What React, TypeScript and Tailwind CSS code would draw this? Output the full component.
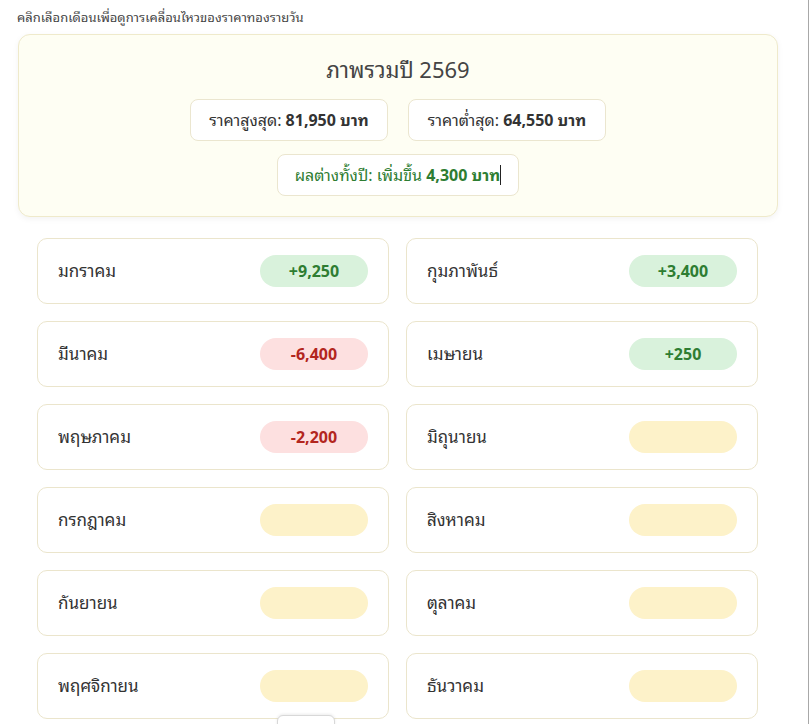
import React from "react";

type Month = { name: string; diff: number | null };

const months: Month[] = [
  { name: "มกราคม", diff: 9250 },
  { name: "กุมภาพันธ์", diff: 3400 },
  { name: "มีนาคม", diff: -6400 },
  { name: "เมษายน", diff: 250 },
  { name: "พฤษภาคม", diff: -2200 },
  { name: "มิถุนายน", diff: null },
  { name: "กรกฎาคม", diff: null },
  { name: "สิงหาคม", diff: null },
  { name: "กันยายน", diff: null },
  { name: "ตุลาคม", diff: null },
  { name: "พฤศจิกายน", diff: null },
  { name: "ธันวาคม", diff: null },
];

function fmt(n: number) {
  const s = Math.abs(n).toLocaleString("en-US");
  return (n >= 0 ? "+" : "-") + s;
}

function Badge({ diff }: { diff: number | null }) {
  if (diff === null) {
    return <div className="w-[108px] h-[32px] rounded-full bg-[#fdf2c9]" />;
  }
  if (diff >= 0) {
    return (
      <div className="w-[108px] h-[32px] rounded-full bg-[#d9f2dc] flex items-center justify-center text-[16px] font-bold text-[#2e7d32]">
        {fmt(diff)}
      </div>
    );
  }
  return (
    <div className="w-[108px] h-[32px] rounded-full bg-[#fde0e0] flex items-center justify-center text-[16px] font-bold text-[#b3261e]">
      {fmt(diff)}
    </div>
  );
}

export default function App() {
  return (
    <div className="relative w-[809px] min-h-[724px] bg-white border-r border-[#a8a8a8] overflow-hidden font-['Noto_Sans','Noto_Sans_Thai_Looped',sans-serif]">
      <div className="pl-[17px] pr-[30px] pt-[7px]">
        <div className="text-[13px] text-[#444] leading-[21px]">
          คลิกเลือกเดือนเพื่อดูการเคลื่อนไหวของราคาทองรายวัน
        </div>
        <div className="mt-[6px] ml-px rounded-[12px] border border-[#efeacb] bg-[#fefef3] shadow-[0_2px_6px_rgba(0,0,0,0.05)] h-[183px] flex flex-col items-center pt-[17px]">
          <div className="text-[22px] text-[#444] leading-[34px]">ภาพรวมปี 2569</div>
          <div className="mt-[13px] flex gap-[20px]">
            <div className="h-[42px] w-[198px] rounded-[8px] border border-[#ebe6cf] bg-white flex items-center justify-center text-[16px] text-[#333]">
              ราคาสูงสุด:&nbsp;<b className="font-bold">81,950 บาท</b>
            </div>
            <div className="h-[42px] w-[198px] rounded-[8px] border border-[#ebe6cf] bg-white flex items-center justify-center text-[16px] text-[#333]">
              ราคาต่ำสุด:&nbsp;<b className="font-bold">64,550 บาท</b>
            </div>
          </div>
          <div className="mt-[13px] h-[42px] w-[242px] rounded-[8px] border border-[#ebe6cf] bg-white flex items-center justify-center text-[16px] text-[#2e7d32]">
            ผลต่างทั้งปี: เพิ่มขึ้น&nbsp;<b className="font-bold">4,300 บาท</b>
            <span className="inline-block w-px h-[20px] bg-[#222]" />
          </div>
        </div>
        <div className="mt-[21px] px-[20px] grid grid-cols-2 gap-x-[17px] gap-y-[17px]">
          {months.map((m) => (
            <div
              key={m.name}
              className="h-[66px] rounded-[10px] border border-[#ebe5cc] bg-white flex items-center justify-between pl-[20px] pr-[20px]"
            >
              <span className="text-[17px] text-[#333]">{m.name}</span>
              <Badge diff={m.diff} />
            </div>
          ))}
        </div>
      </div>
      <div className="absolute left-[277px] top-[715px] w-[58px] h-[20px] rounded-t-[6px] border border-[#d8d8d8] bg-white shadow-[0_-1px_3px_rgba(0,0,0,0.08)]" />
    </div>
  );
}
